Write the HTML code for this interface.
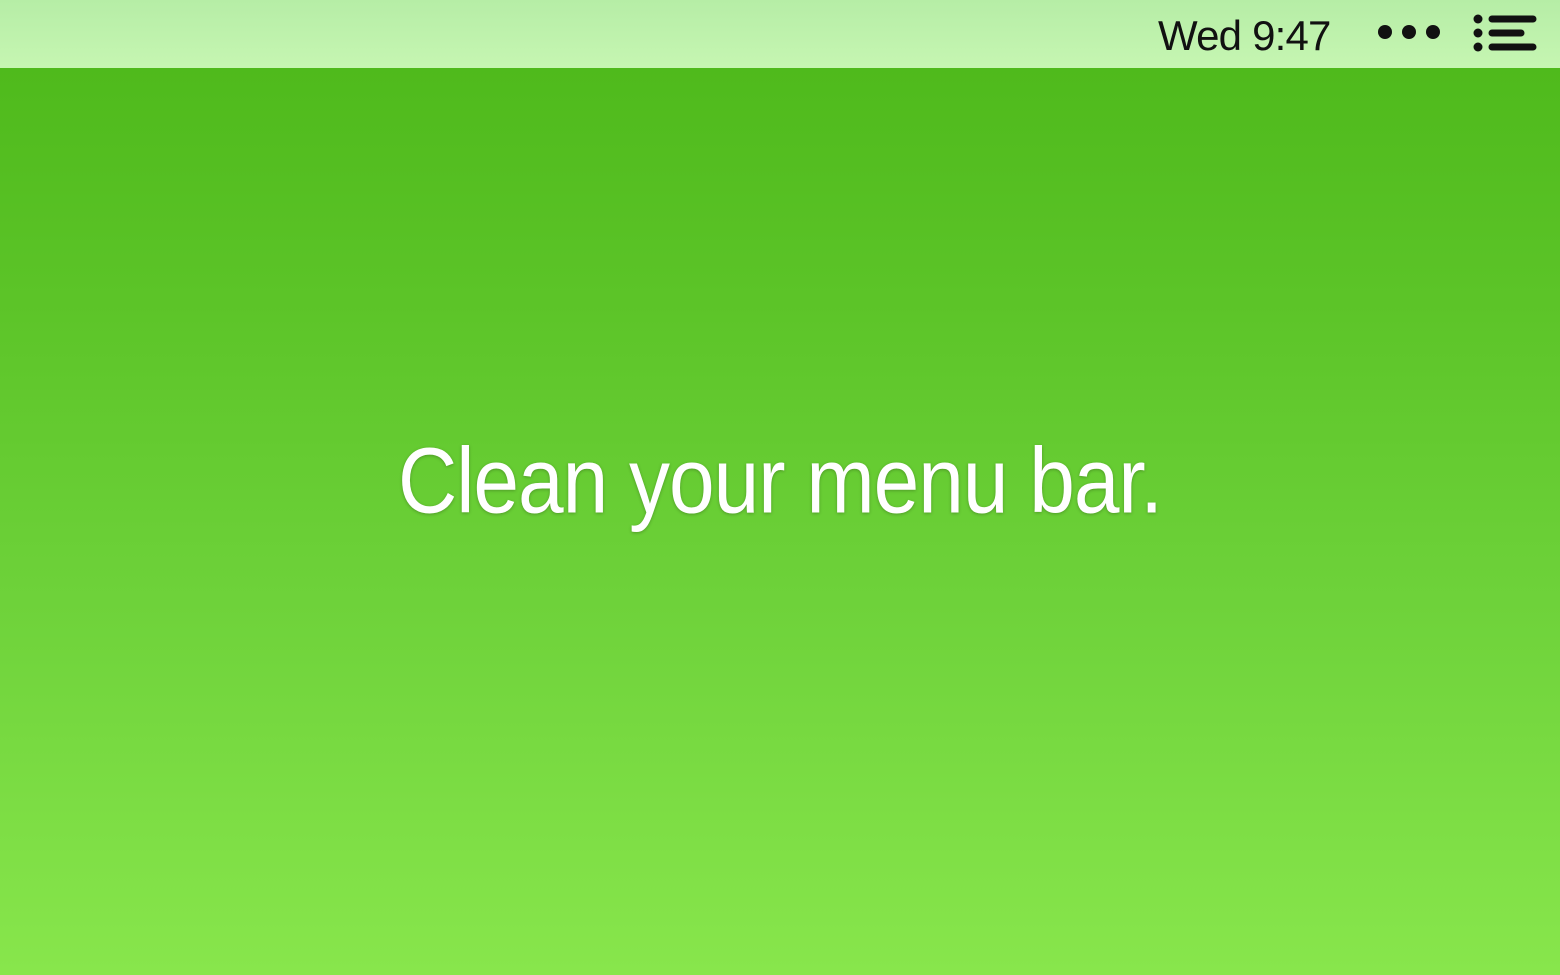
<!DOCTYPE html>
<html><head><meta charset="utf-8">
<style>
html,body{margin:0;padding:0;}
body{width:1560px;height:975px;overflow:hidden;position:relative;font-family:"Liberation Sans",sans-serif;
background:linear-gradient(to bottom,#4cb818 0px,#4fba1c 68px,#5cc428 300px,#6ed23a 600px,#88e64c 975px);}
.bar{position:absolute;left:0;top:0;width:1560px;height:68px;background:linear-gradient(to bottom,#b6eda6,#c6f6b2);}
.time{position:absolute;left:1158px;top:15px;font-size:42px;line-height:42px;letter-spacing:-0.8px;color:#111;white-space:nowrap;}
.title{position:absolute;left:0;width:1560px;top:441px;text-align:center;font-size:82px;line-height:90px;letter-spacing:-1px;color:#fff;text-shadow:0 1px 3px rgba(0,0,0,0.25);white-space:nowrap;transform:scaleY(1.13);transform-origin:50% 76px;}
</style></head><body>
<div class="bar"></div>
<div class="time">Wed 9:47</div>
<svg style="position:absolute;left:0;top:0" width="1560" height="68">
<g fill="#111">
<circle cx="1385" cy="32" r="7"/><circle cx="1409" cy="32" r="7"/><circle cx="1433" cy="32" r="7"/>
<circle cx="1478" cy="19" r="4.5"/><circle cx="1478" cy="33" r="4.5"/><circle cx="1478" cy="47" r="4.5"/>
</g>
<g stroke="#111" stroke-width="7" stroke-linecap="round">
<line x1="1492" y1="19" x2="1533" y2="19"/>
<line x1="1492" y1="33" x2="1521" y2="33"/>
<line x1="1492" y1="47" x2="1533" y2="47"/>
</g>
</svg>
<div class="title">Clean your menu bar.</div>
</body></html>
